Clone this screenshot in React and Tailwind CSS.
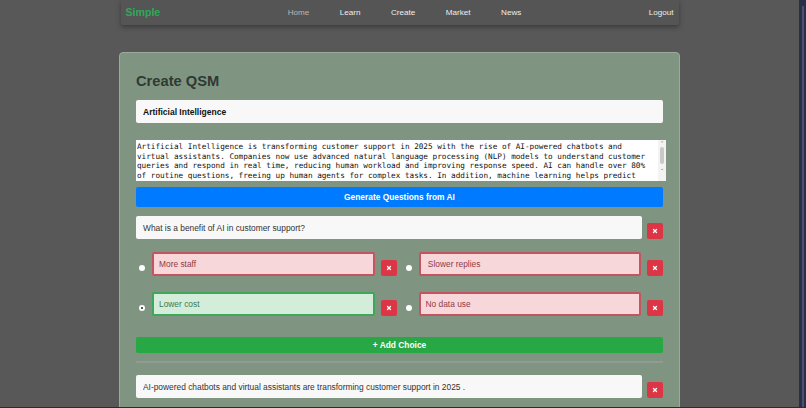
import React from "react";
import { X } from "lucide-react";

const essay =
  "Artificial Intelligence is transforming customer support in 2025 with the rise of AI-powered chatbots and virtual assistants. Companies now use advanced natural language processing (NLP) models to understand customer queries and respond in real time, reducing human workload and improving response speed. AI can handle over 80% of routine questions, freeing up human agents for complex tasks. In addition, machine learning helps predict";

function DeleteButton({ className = "" }) {
  return (
    <button className={`w-4 h-4 rounded-[2px] bg-[#dc3545] flex items-center justify-center shrink-0 ${className}`}>
      <X size={6} strokeWidth={5} className="text-white" />
    </button>
  );
}

function Choice({ label, correct, rowClass }) {
  return (
    <div className={`flex items-end ${rowClass}`}>
      <span className="w-[6px] h-[6px] rounded-full bg-white mb-[5px] ml-[3px] mr-[7px] shrink-0 flex items-center justify-center">
        {correct && <span className="w-[2.5px] h-[2.5px] rounded-full bg-[#222]" />}
      </span>
      <input
        readOnly
        value={label}
        className={`flex-1 min-w-0 h-[24px] px-[5px] rounded-[2px] border-2 text-[8.4px] outline-none ${
          correct
            ? "bg-[#d4edda] border-[#3fa65a] text-[#3c7a4d]"
            : "bg-[#f8d7da] border-[#c4545f] text-[#8f3b47]"
        }`}
      />
      <DeleteButton className="ml-[6px]" />
    </div>
  );
}

export default function App() {
  return (
    <div
      className="h-screen overflow-hidden flex border-b border-[#2a2c33] bg-[#585858]"
      style={{ fontFamily: "'Liberation Sans', Arial, sans-serif" }}
    >
      <div className="flex-1 min-w-0">
        {/* Navbar */}
        <nav className="w-[558px] h-[25px] mx-auto pl-[5px] pr-[5px] pt-[1px] flex items-center justify-between bg-[#555555] rounded-b-[2px] shadow-[0_2px_5px_rgba(0,0,0,0.35)]">
          <span className="text-[10.6px] font-bold text-[#2fa85a]">Simple</span>
          <div className="flex gap-[30.5px] text-[8.1px] text-[#eeeeee]">
            <span className="text-[#b5b5b5]">Home</span>
            <span>Learn</span>
            <span>Create</span>
            <span>Market</span>
            <span>News</span>
          </div>
          <span className="text-[8.1px] text-[#eeeeee]">Logout</span>
        </nav>

        {/* Card */}
        <div className="w-[561px] mx-auto mt-[27px] pt-[19px] pb-[20px] px-[16px] rounded-[4px] border border-[#9aaa9d] bg-[#7f9582]">
          <h1 className="text-[14.7px] leading-[18px] font-bold text-[#2f3a32] mb-[10px]">Create QSM</h1>

          <input
            readOnly
            value="Artificial Intelligence"
            className="block w-full h-[23px] px-[7px] rounded-[2px] bg-[#f8f8f8] text-[8.5px] font-bold text-[#111] outline-none"
          />

          {/* Textarea with its scrollbar */}
          <div className="relative w-[530px] h-[41px] mt-[17px] bg-white overflow-hidden">
            <textarea
              readOnly
              value={essay}
              className="block w-[521px] h-[41px] pl-[1px] pt-[2px] resize-none overflow-hidden outline-none text-[7.68px] leading-[9.67px] text-[#111] bg-white"
              style={{ fontFamily: "'DejaVu Sans Mono', monospace" }}
            />
            <div className="absolute right-0 top-0 w-[8px] h-full bg-[#f3f3f3] flex flex-col items-center">
              <span className="text-[5px] leading-[7px] text-[#777]">⌃</span>
              <span className="w-[4px] h-[17px] bg-[#c9c9c9] rounded-full" />
              <span className="text-[5px] leading-[9px] text-[#555]">⌄</span>
            </div>
          </div>

          <button className="block w-full h-[20px] mt-[6px] rounded-[2px] bg-[#007bff] text-white text-[8.4px] font-bold">
            Generate Questions from AI
          </button>

          {/* Question */}
          <div className="flex items-end gap-[5px] mt-[9px]">
            <input
              readOnly
              value="What is a benefit of AI in customer support?"
              className="flex-1 min-w-0 h-[23px] px-[7px] rounded-[2px] bg-[#f8f8f8] text-[8.4px] text-[#333] outline-none"
            />
            <DeleteButton />
          </div>

          <div className="grid grid-cols-2 gap-x-[6px]">
            <Choice label="More staff" rowClass="mt-[13px]" />
            <Choice label=" Slower replies" rowClass="mt-[13px]" />
            <Choice label="Lower cost" correct rowClass="mt-[16px]" />
            <Choice label="No data use" rowClass="mt-[16px]" />
          </div>

          <button className="block w-full h-[16px] mt-[21px] rounded-[2px] bg-[#28a745] text-white text-[8.4px] font-bold">
            + Add Choice
          </button>

          <hr className="mt-[8px] border-0 h-[2px] bg-[#909c92]" />

          <div className="flex items-end gap-[5px] mt-[12px]">
            <input
              readOnly
              value="AI-powered chatbots and virtual assistants are transforming customer support in 2025 ."
              className="flex-1 min-w-0 h-[23px] px-[7px] rounded-[2px] bg-[#f8f8f8] text-[8.4px] text-[#333] outline-none"
            />
            <DeleteButton />
          </div>
        </div>
      </div>

      {/* Window edge on the right */}
      <aside className="w-[7px] shrink-0 bg-[#2b2f45] flex justify-center pt-[6px]">
        <span className="w-[2px] h-full bg-[#4b5170]" />
      </aside>
    </div>
  );
}
